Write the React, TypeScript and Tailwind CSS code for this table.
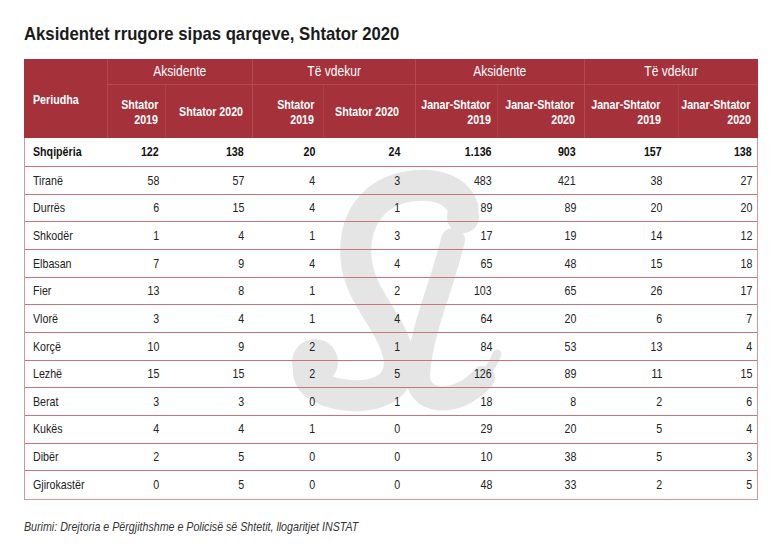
import React from "react";

type Row = { name: string; values: (string | number)[]; bold?: boolean };

const rows: Row[] = [
  { name: "Shqipëria", values: [122, 138, 20, 24, "1.136", 903, 157, 138], bold: true },
  { name: "Tiranë", values: [58, 57, 4, 3, 483, 421, 38, 27] },
  { name: "Durrës", values: [6, 15, 4, 1, 89, 89, 20, 20] },
  { name: "Shkodër", values: [1, 4, 1, 3, 17, 19, 14, 12] },
  { name: "Elbasan", values: [7, 9, 4, 4, 65, 48, 15, 18] },
  { name: "Fier", values: [13, 8, 1, 2, 103, 65, 26, 17] },
  { name: "Vlorë", values: [3, 4, 1, 4, 64, 20, 6, 7] },
  { name: "Korçë", values: [10, 9, 2, 1, 84, 53, 13, 4] },
  { name: "Lezhë", values: [15, 15, 2, 5, 126, 89, 11, 15] },
  { name: "Berat", values: [3, 3, 0, 1, 18, 8, 2, 6] },
  { name: "Kukës", values: [4, 4, 1, 0, 29, 20, 5, 4] },
  { name: "Dibër", values: [2, 5, 0, 0, 10, 38, 5, 3] },
  { name: "Gjirokastër", values: [0, 5, 0, 0, 48, 33, 2, 5] },
];

// right padding of each numeric column, so header and figures share an edge
const padRight = [
  "pr-[7px]",
  "pr-[9px]",
  "pr-[9px]",
  "pr-[16px]",
  "pr-[6px]",
  "pr-[9px]",
  "pr-[17px]",
  "pr-[7px]",
];

const subHeads = [
  ["Shtator", "2019"],
  ["Shtator 2020"],
  ["Shtator", "2019"],
  ["Shtator 2020"],
  ["Janar-Shtator", "2019"],
  ["Janar-Shtator", "2020"],
  ["Janar-Shtator", "2019"],
  ["Janar-Shtator", "2020"],
];

const cols = "grid grid-cols-[84px_57px_87px_71px_92px_82px_87px_94px_80px]";

// no narrow face installed, so squeeze Liberation Sans to an Arial Narrow width
function Narrow({ children, origin = "origin-right" }: { children: React.ReactNode; origin?: string }) {
  return <span className={`inline-block whitespace-nowrap scale-x-[0.82] ${origin}`}>{children}</span>;
}

function Watermark() {
  return (
    <svg
      className="absolute left-[246px] top-[12px] w-[270px] h-[290px] pointer-events-none"
      viewBox="270 150 270 290"
      fill="none"
    >
      <g stroke="#e5e5e5" strokeLinecap="round" fill="none">
        {/* S body */}
        <path
          d="M462 208 C455 188 432 183 410 186 C374 191 352 218 355 258 C358 298 392 322 398 358 C402 390 372 398 344 395 C320 392 304 382 308 366"
          strokeWidth={31}
        />
        {/* i stroke */}
        <path d="M452 240 C440 290 420 330 417 374 C415 404 455 408 482 378" strokeWidth={24} />
        <path d="M482 378 C488 370 493 362 496 354" strokeWidth={9} />
      </g>
      <circle cx={462} cy={217} r={16} fill="#e5e5e5" />
      <circle cx={314} cy={362} r={23} fill="#e5e5e5" />
    </svg>
  );
}

export default function App() {
  return (
    <div className="w-[783px] h-[550px] bg-white font-['Liberation_Sans',Arial,sans-serif] text-[#222]">
      <h1 className="pt-[22px] pl-[24px] text-[19px] leading-[24px] font-bold text-[#1b1b1b]">
        <span className="inline-block whitespace-nowrap scale-x-[0.88] origin-left">
          Aksidentet rrugore sipas qarqeve, Shtator 2020
        </span>
      </h1>

      <div className="ml-[24px] mt-[13px] w-[734px]">
        {/* Header */}
        <div className={`${cols} grid-rows-[26px_53px] bg-[#a5323a] text-white text-[13px]`}>
          <div className="row-span-2 flex items-center pl-[9px] pt-[3px] font-bold border-r border-[#b2474e]">
            <Narrow origin="origin-left">Periudha</Narrow>
          </div>
          {["Aksidente", "Të vdekur", "Aksidente", "Të vdekur"].map((g, i) => (
            <div
              key={i}
              className={`col-span-2 flex items-center justify-center text-[14px] border-b border-[#b34a50] ${
                i === 0 ? "" : "border-l"
              }`}
            >
              <span className="inline-block whitespace-nowrap scale-x-[0.86] origin-center">{g}</span>
            </div>
          ))}
          {subHeads.map((lines, i) => (
            <div
              key={i}
              className={`flex flex-col items-end justify-center font-bold leading-[15px] ${padRight[i]} ${
                i === 0 ? "" : i % 2 === 0 ? "border-l border-[#b34a50]" : "border-l border-[#ad3f46]"
              }`}
            >
              {lines.map((l) => (
                <Narrow key={l}>{l}</Narrow>
              ))}
            </div>
          ))}
        </div>

        {/* Body */}
        <div className="relative border-x border-b border-[#d4979d]">
          <Watermark />
          {rows.map((r, ri) => (
            <div
              key={r.name}
              className={`relative ${cols} text-[13px] ${
                ri === 0 ? "h-[29px] font-bold text-[#111]" : "h-[27.67px]"
              } ${ri === rows.length - 1 ? "" : "border-b border-[#c7757d]"}`}
            >
              <div className="flex items-center pl-[8px]">
                <Narrow origin="origin-left">{r.name}</Narrow>
              </div>
              {r.values.map((v, i) => (
                <div key={i} className={`flex items-center justify-end ${padRight[i]}`}>
                  <Narrow>{v}</Narrow>
                </div>
              ))}
            </div>
          ))}
        </div>
      </div>

      <p className="pl-[24px] mt-[17px] text-[13px] italic text-[#333]">
        <Narrow origin="origin-left">
          Burimi: Drejtoria e Përgjithshme e Policisë së Shtetit, llogaritjet INSTAT
        </Narrow>
      </p>
    </div>
  );
}
